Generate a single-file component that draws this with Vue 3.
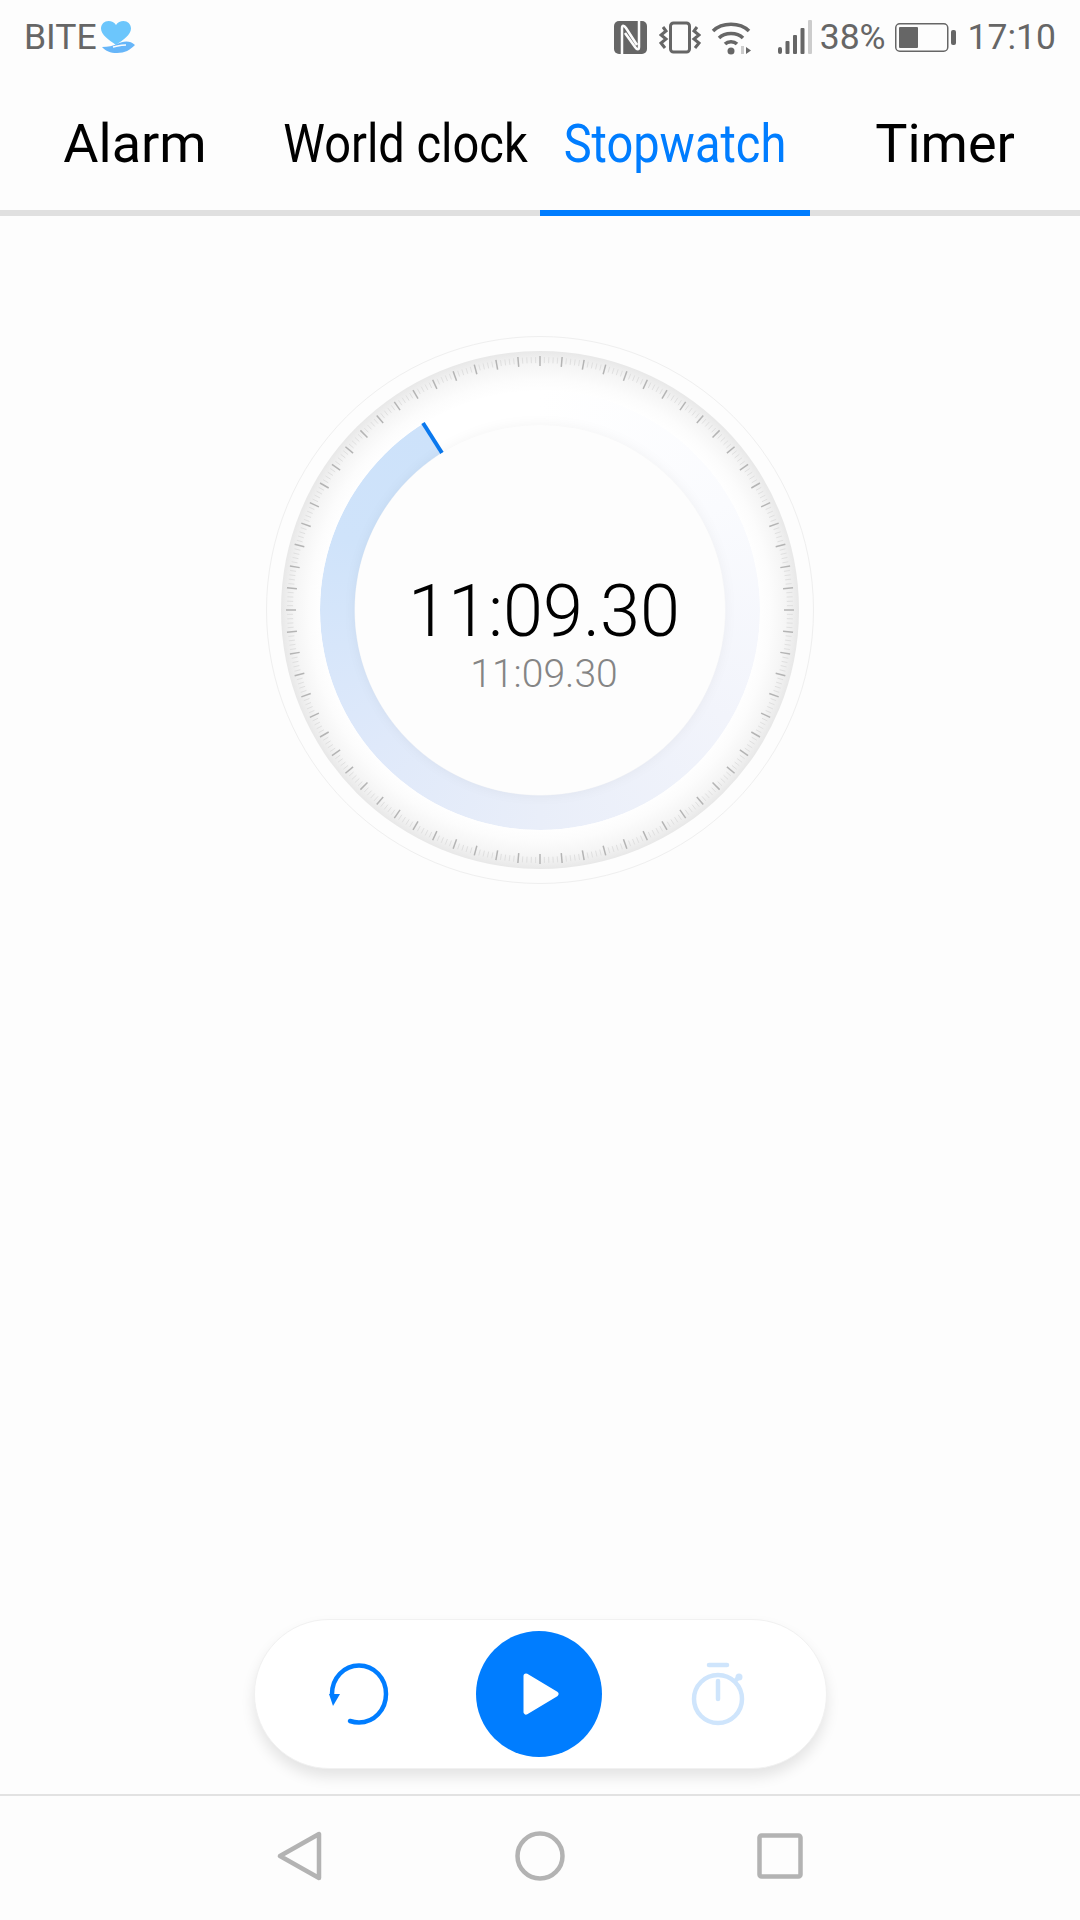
<template>
  <div class="screen">
    <div class="status">
      <div class="carrier">
        <span>BITE</span>
        <svg width="36" height="33" viewBox="0 0 36 33">
          <path d="M16 24 C9 19 1 14 1 7.500 C1 3 4.500 0 8.500 0 C11.500 0 14.500 1.500 16 4 C17.500 1.500 20.500 0 23.500 0 C27.500 0 31 3 31 7.500 C31 14 23 19 16 24 Z" fill="#6cc6fc" />
          <path d="M2 26 C8 26 13 25 17 23 C23 20 30 19 35 24 C30 29 25 32 17 32 C10 32 6 30 2 26 Z" fill="#67b6f9" />
          <path d="M13 26 C18 25 21 24 26 24" fill="none" stroke="#fdfdfd" stroke-width="1.500" />
        </svg>
      </div>
      <div class="status-right">
        <svg class="nfc" width="33" height="33" viewBox="0 0 33 33">
          <rect width="33" height="33" rx="5" fill="#666" />
          <path d="M8 33 V7 C8 4 10 4 12 7 L23 24 M25 0 V26 C25 29 23 29 21 26 L11 12" fill="none" stroke="#fdfdfd" stroke-width="2.500" />
        </svg>
        <svg class="vib" width="42" height="33" viewBox="0 0 42 33">
          <rect x="11.500" y="2" width="19" height="29" rx="3" fill="none" stroke="#666" stroke-width="3" />
          <path d="M4 6 L7 10 L2 14 L7 18 L2 22 L6 27 M38 6 L35 10 L40 14 L35 18 L40 22 L36 27" fill="none" stroke="#666" stroke-width="3" />
        </svg>
        <svg class="wifi" width="40" height="35" viewBox="0 0 40 35">
          <path d="M2 11 C11 2 29 2 38 11" fill="none" stroke="#666" stroke-width="3.500" />
          <path d="M8 18 C14 12 26 12 32 18" fill="none" stroke="#666" stroke-width="3.500" />
          <path d="M14 24 C17 21 23 21 26 24" fill="none" stroke="#666" stroke-width="3.500" />
          <circle cx="20" cy="31" r="3.500" fill="#666" />
          <path d="M30 26 V34 H33 V26 Z" fill="#ccc" />
          <path d="M35 27 L40 30.500 L35 34 Z" fill="#666" />
        </svg>
        <svg class="signal" width="35" height="35" viewBox="0 0 35 35">
          <rect x="0" y="27" width="4" height="7" rx="2" fill="#666" />
          <rect x="7.500" y="21" width="4" height="13" rx="1" fill="#666" />
          <rect x="15" y="15" width="4" height="19" rx="1" fill="#666" />
          <rect x="22.500" y="8" width="4" height="26" rx="1" fill="#666" />
          <rect x="30" y="0" width="4" height="34" rx="1" fill="#ccc" />
        </svg>
        <span class="percent">38%</span>
        <svg class="battery" width="61" height="29" viewBox="0 0 61 29">
          <rect x="0.750" y="0.750" width="52" height="27.500" rx="4" fill="none" stroke="#666" stroke-width="1.500" />
          <rect x="4" y="4" width="19" height="21" rx="1" fill="#666" />
          <rect x="56" y="7" width="5" height="15" rx="2" fill="#666" />
        </svg>
        <span class="clock">17:10</span>
      </div>
    </div>

    <div class="tabs">
      <div v-for="tab in tabs" :key="tab.name" class="tab" :class="{ active: tab.active }">
        <span :class="{ narrow: tab.narrow }">{{ tab.name }}</span>
      </div>
    </div>

    <div class="dial">
      <div class="band"></div>
      <div class="progress"></div>
      <svg class="ticks" width="548" height="548" viewBox="-274 -274 548 548">
        <line
          v-for="t in ticks"
          :key="t.deg"
          :x1="t.x1" :y1="t.y1" :x2="t.x2" :y2="t.y2"
          :stroke="t.major ? '#b4b4b4' : '#e0e0e0'"
          :stroke-width="t.major ? 1.5 : 1"
        />
        <line x1="-98" y1="-157" x2="-117" y2="-187" stroke="#0a78ee" stroke-width="4" />
      </svg>
      <div class="face">
        <div class="time">11:09.30</div>
        <div class="lap">11:09.30</div>
      </div>
    </div>

    <div class="controls">
      <svg width="64" height="64" viewBox="0 0 64 64">
        <path d="M23 59 C26 60 29 60.500 32 60.500 C47 60.500 59 48 59 32 C59 16 47 3.500 32 3.500 C17 3.500 5 16 5 32" fill="none" stroke="#007dff" stroke-width="4.500" stroke-linecap="round" />
        <path d="M2 32 L13 32 L6 44 Z" fill="#007dff" />
      </svg>
      <button class="play">
        <svg width="36" height="42" viewBox="0 0 36 42">
          <path d="M3 3 L33 21 L3 39 Z" fill="#fff" stroke="#fff" stroke-width="5" stroke-linejoin="round" />
        </svg>
      </button>
      <svg class="lap-icon" width="64" height="64" viewBox="0 0 64 64">
        <circle cx="32" cy="37" r="24" fill="none" stroke="#cfe5fc" stroke-width="4.500" />
        <path d="M23 3 H41 M32 19 V37 M49 19 L52 16" fill="none" stroke="#cfe5fc" stroke-width="4.500" stroke-linecap="round" />
        <circle cx="53" cy="15" r="3.500" fill="#cfe5fc" />
      </svg>
    </div>

    <div class="nav">
      <div class="nav-item">
        <svg width="46" height="52" viewBox="0 0 46 52">
          <path d="M42 4 V48 L3 26 Z" fill="none" stroke="#b3b3b3" stroke-width="4.500" stroke-linejoin="round" />
        </svg>
      </div>
      <div class="nav-item">
        <svg width="50" height="50" viewBox="0 0 50 50">
          <circle cx="25" cy="25" r="22.500" fill="none" stroke="#b3b3b3" stroke-width="4.500" />
        </svg>
      </div>
      <div class="nav-item">
        <svg width="46" height="46" viewBox="0 0 46 46">
          <rect x="2.500" y="2.500" width="41" height="41" rx="2" fill="none" stroke="#b3b3b3" stroke-width="4.500" />
        </svg>
      </div>
    </div>
  </div>
</template>

<script setup>
const tabs = [
  { name: 'Alarm' },
  { name: 'World clock', narrow: true },
  { name: 'Stopwatch', narrow: true, active: true },
  { name: 'Timer' }
]

// una marca por grado, las largas cada 5
const ticks = []
for (let deg = 0; deg < 360; deg++) {
  const major = deg % 5 === 0
  const a = (deg * Math.PI) / 180
  const r1 = major ? 244 : 247
  const r2 = major ? 254 : 253
  ticks.push({
    deg,
    major,
    x1: r1 * Math.sin(a),
    y1: -r1 * Math.cos(a),
    x2: r2 * Math.sin(a),
    y2: -r2 * Math.cos(a)
  })
}
</script>

<style>
html, body {
  background: #fdfdfd;
}
</style>

<style scoped>
.screen {
  width: 1080px;
  height: 1920px;
  display: flex;
  flex-direction: column;
  overflow: hidden;
  background: #fdfdfd;
  font-family: Roboto, "Liberation Sans", sans-serif;
}

/* barra de estado */
.status {
  flex: none;
  height: 72px;
  box-sizing: border-box;
  display: flex;
  align-items: center;
  justify-content: space-between;
  padding: 2px 24px 0 24px;
  color: #666;
  font-size: 35.500px;
}
.carrier {
  display: flex;
  align-items: center;
  gap: 3px;
}
.status-right {
  display: flex;
  align-items: center;
}
.status-right svg {
  flex: none;
}
.vib { margin-left: 12px; }
.wifi { margin-left: 10px; }
.signal { margin-left: 27px; }
.percent { margin-left: 7px; }
.battery { margin-left: 9px; }
.clock { margin-left: 12px; }

/* pestañas */
.tabs {
  flex: none;
  display: flex;
  height: 138px;
  border-bottom: 6px solid #e0e0e0;
}
.tab {
  position: relative;
  width: 270px;
  box-sizing: border-box;
  padding-top: 4px;
  display: flex;
  align-items: center;
  justify-content: center;
  font-size: 54px;
  white-space: nowrap;
  color: #000;
}
.narrow {
  display: inline-block;
  transform: scaleX(0.87);
}
.tab.active {
  color: #007dff;
}
.tab.active::after {
  content: "";
  position: absolute;
  left: 0;
  right: 0;
  bottom: -6px;
  height: 6px;
  background: #007dff;
}

/* esfera */
.dial {
  position: relative;
  flex: none;
  width: 548px;
  height: 548px;
  margin: 120px auto 0;
  box-sizing: border-box;
  border: 1px solid #efefef;
  border-radius: 50%;
}
.band {
  position: absolute;
  inset: 14px;
  border-radius: 50%;
  background: radial-gradient(closest-side, #fff 84%, #fcfcfc 89%, #f5f5f5 95%, #e8e8e8 100%);
}
.progress {
  position: absolute;
  inset: 53px;
  border-radius: 50%;
  background: conic-gradient(#fff 0deg, #fafbfe 60deg, #f2f4fb 120deg, #e9eef9 180deg, #dfe9fa 230deg, #cfe3fa 290deg, #cde2fa 328deg, #fff 328deg);
  -webkit-mask: radial-gradient(closest-side, transparent 84%, #000 84.500%);
  mask: radial-gradient(closest-side, transparent 84%, #000 84.500%);
}
.ticks {
  position: absolute;
  left: -1px;
  top: -1px;
}
.face {
  position: absolute;
  inset: 88px;
  border-radius: 50%;
  background: #fdfdfd;
  box-shadow: 0 0 14px rgba(0, 0, 0, 0.05);
  display: flex;
  flex-direction: column;
  align-items: center;
  justify-content: center;
  padding: 48px 0 0 8px;
  box-sizing: border-box;
}
.time {
  font-size: 72px;
  font-weight: 300;
  line-height: 80px;
  color: #000;
}
.lap {
  font-size: 39px;
  font-weight: 300;
  line-height: 44px;
  color: #858585;
}

/* controles */
.controls {
  flex: none;
  width: 573px;
  height: 150px;
  margin: auto auto 25px;
  padding-right: 3px;
  box-sizing: border-box;
  border: 1px solid #f1f1f1;
  border-radius: 75px;
  background: #fff;
  box-shadow: 0 8px 14px rgba(0, 0, 0, 0.1);
  display: flex;
  align-items: center;
  justify-content: center;
  gap: 85px;
}
.lap-icon {
  margin-left: -1px;
}
.play {
  width: 126px;
  height: 126px;
  padding: 0 0 0 4px;
  border: none;
  border-radius: 50%;
  background: #007dff;
  display: flex;
  align-items: center;
  justify-content: center;
}

/* navegación */
.nav {
  flex: none;
  height: 126px;
  border-top: 2px solid #e2e2e2;
  display: flex;
  justify-content: center;
  align-items: center;
  padding-bottom: 4px;
  box-sizing: border-box;
}
.nav-item {
  width: 240px;
  display: flex;
  justify-content: center;
}
</style>
